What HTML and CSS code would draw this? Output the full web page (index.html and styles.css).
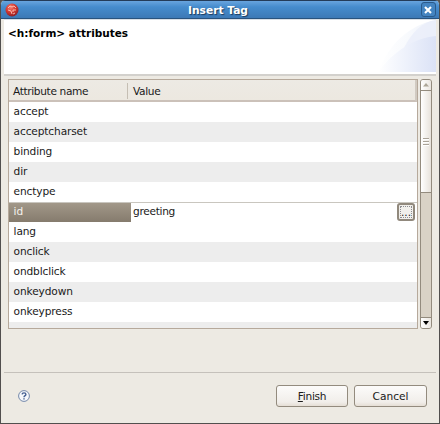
FILE: index.html
```html
<!DOCTYPE html>
<html lang="en">
<head>
<meta charset="utf-8">
<title>Insert Tag</title>
<link rel="stylesheet" href="styles.css">
</head>
<body>
<div class="window">
  <header class="titlebar">
    <svg class="app" width="14" height="14" viewBox="0 0 14 14">
      <defs><radialGradient id="ball" cx=".4" cy=".3" r=".7"><stop offset="0" stop-color="#f58070"/><stop offset=".5" stop-color="#d93c33"/><stop offset="1" stop-color="#8f2026"/></radialGradient></defs>
      <circle cx="7" cy="7" r="6.5" fill="url(#ball)"/>
      <path d="M3 5l2-2 2 1 2-1 2 2M3 7l3 1 1 3M8 9V7h3M8 11l2-1" fill="none" stroke="#ffd5c9" stroke-width=".8"/>
    </svg>
    <h1>Insert Tag</h1>
    <button class="close" aria-label="Close"><svg width="8" height="8" viewBox="0 0 8 8"><path d="M1 1l6 6M7 1L1 7" stroke="#fff" stroke-width="2.1"/></svg></button>
  </header>
  <section class="banner">
    <h2>&lt;h:form&gt; attributes</h2>
    <svg width="60" height="52" viewBox="0 0 60 52">
      <defs><linearGradient id="sweep"><stop offset="0" stop-color="#fff"/><stop offset=".5" stop-color="#edf1fb"/><stop offset="1" stop-color="#dbe2f6"/></linearGradient>
      <linearGradient id="soft"><stop offset="0" stop-color="#fff"/><stop offset=".5" stop-color="#f8fafd"/><stop offset="1" stop-color="#eff3fb"/></linearGradient></defs>
      <path d="M2 52C13 24 33 5 60 0V52Z" fill="url(#soft)"/>
      <path d="M28 28C36 12 46 2 60 0V20Z" fill="#e8edf9" opacity=".7"/>
      <path d="M2 52C18 31 38 18 60 16V52Z" fill="url(#sweep)"/>
    </svg>
  </section>
  <main class="content">
    <div class="table">
      <div class="head"><span class="name">Attribute name</span><span class="value">Value</span></div>
      <div class="row"><span class="name">accept</span></div>
      <div class="row"><span class="name">acceptcharset</span></div>
      <div class="row"><span class="name">binding</span></div>
      <div class="row"><span class="name">dir</span></div>
      <div class="row"><span class="name">enctype</span></div>
      <div class="row selected"><span class="name">id</span><span class="value">greeting</span><button class="browse"><span>...</span></button></div>
      <div class="row"><span class="name">lang</span></div>
      <div class="row"><span class="name">onclick</span></div>
      <div class="row"><span class="name">ondblclick</span></div>
      <div class="row"><span class="name">onkeydown</span></div>
      <div class="row"><span class="name">onkeypress</span></div>
      <div class="row"></div>
    </div>
    <div class="scrollbar">
      <div class="step"><svg width="6" height="4"><path d="M0 3.5L3 0l3 3.5z" fill="#aca698"/></svg></div>
      <div class="thumb"><i></i><i></i><i></i></div>
      <div class="track"></div>
      <div class="step down"><svg width="6" height="4"><path d="M0 0h6L3 4z" fill="#000"/></svg></div>
    </div>
  </main>
  <footer class="actions">
    <svg class="help" width="12" height="12" viewBox="0 0 12 12"><circle cx="6" cy="6" r="5.4" fill="#f6f8fb" stroke="#7488aa"/><path d="M4.1 4.4C4.2 2.3 7.9 2.3 7.9 4.4 7.9 5.6 6 5.6 6 7.3M6 8.2v1.4" fill="none" stroke="#445f91" stroke-width="1.4"/></svg>
    <button class="button finish"><u>F</u>inish</button>
    <button class="button">Cancel</button>
  </footer>
</div>
</body>
</html>
```
FILE: styles.css
```css
* { box-sizing: border-box; }
body { margin: 0; background: #57534f; font-family: "DejaVu Sans", sans-serif; font-size: 10.6px; color: #1a1a1a; }
button { font: inherit; color: inherit; padding: 0; }
svg { display: block; }
.window { width: 440px; height: 424px; background: #edeae3; border: 1px solid #514f4e; border-top: 0; border-radius: 5px 5px 0 0; overflow: hidden; display: flex; flex-direction: column; }
.titlebar { height: 19px; flex: none; display: flex; align-items: center; justify-content: space-between; padding: 0 3px 0 4px; background: linear-gradient(#68a4de, #468ccd 35%, #3c79b6); border-top: 1px solid #243c59; border-bottom: 1px solid #29537e; }
.titlebar h1 { margin: 1px 4px 0 0; font-size: 10.7px; line-height: 17px; color: #fff; text-shadow: 1px 1px 1px #1c3b5c; }
.close { width: 15px; height: 15px; display: grid; place-items: center; border: 1px solid #2b5a8b; border-radius: 3px; background: #4484c1; }
.banner { height: 57px; flex: none; margin: 0 3px; display: flex; justify-content: space-between; background: #fff; border-top: 1px solid #d8dee5; border-bottom: 2px solid #d3d1cd; }
.banner h2 { margin: 6px 0 0 4px; font-size: 10.5px; line-height: 14px; color: #000; }
.content { display: flex; justify-content: space-between; margin: 3px 7px 0; height: 250px; flex: none; }
.table { width: 410px; height: 250px; border: 1px solid #b6a99b; background: #fff; overflow: hidden; }
.head, .row { display: flex; height: 20px; line-height: 19px; }
.row { letter-spacing: -.13px; }
.head { height: 22px; line-height: 22px; background: linear-gradient(#edeae4, #ece8e0); border-bottom: 2px solid #cbc1b9; border-right: 2px solid #d1cac1; letter-spacing: -.36px; }
.name { width: 122px; padding-left: 4.6px; }
.head .name { width: 119px; padding-left: 4px; height: 16px; margin-top: 3px; line-height: 16px; border-right: 1px solid #c5beb3; }
.head .value { padding-left: 5px; }
.row:nth-child(odd) { background: #ededed; }
.row.selected { background: #fff; border-top: 1px solid #c9c6bf; line-height: 17px; }
.selected .name { color: #f5f2ed; background: linear-gradient(#a29889, #857b6d); }
.selected .value { flex: 1; padding-left: 2px; letter-spacing: -.3px; }
.browse { width: 18px; height: 18px; margin: 0 2px 0 0; padding: 1px; border: 2px solid #91897d; border-radius: 3px; background: #f1efeb; line-height: 8px; }
.browse span { display: block; height: 12px; border: 1px dotted #8d8d91; line-height: 11px; }
.scrollbar { width: 12px; display: flex; flex-direction: column; border: 1px solid #938b7e; border-radius: 3px; background: #d9d2c6; overflow: hidden; }
.step { height: 11px; flex: none; display: grid; place-items: center; background: linear-gradient(90deg, #fff, #e9e5df); border-bottom: 1px solid #938b7e; }
.step.down { border: 0; border-top: 1px solid #938b7e; }
.thumb { height: 102px; flex: none; display: flex; flex-direction: column; align-items: center; justify-content: center; gap: 1px; background: linear-gradient(90deg, #fff, #e7e2db); border-bottom: 1px solid #938b7e; }
.thumb i { width: 6px; height: 2px; background: #fff; border-top: 1px solid #aaa398; }
.track { flex: 1; }
.actions { flex: 1; margin: 43px 3px 0; padding: 12px 9px 0 14px; border-top: 1px solid #c5c1bb; display: flex; align-items: flex-start; gap: 6px; }
.help { margin: 5px auto 0 0; }
.button { width: 73px; height: 22px; border: 1px solid #938b7e; border-radius: 3px; background: linear-gradient(#fcfbfa, #f1eeea 80%, #e5ded5); font-size: 10.6px; line-height: 19px; }
.finish { width: 72px; letter-spacing: -.3px; }
.button u { text-underline-offset: 1px; }
```
